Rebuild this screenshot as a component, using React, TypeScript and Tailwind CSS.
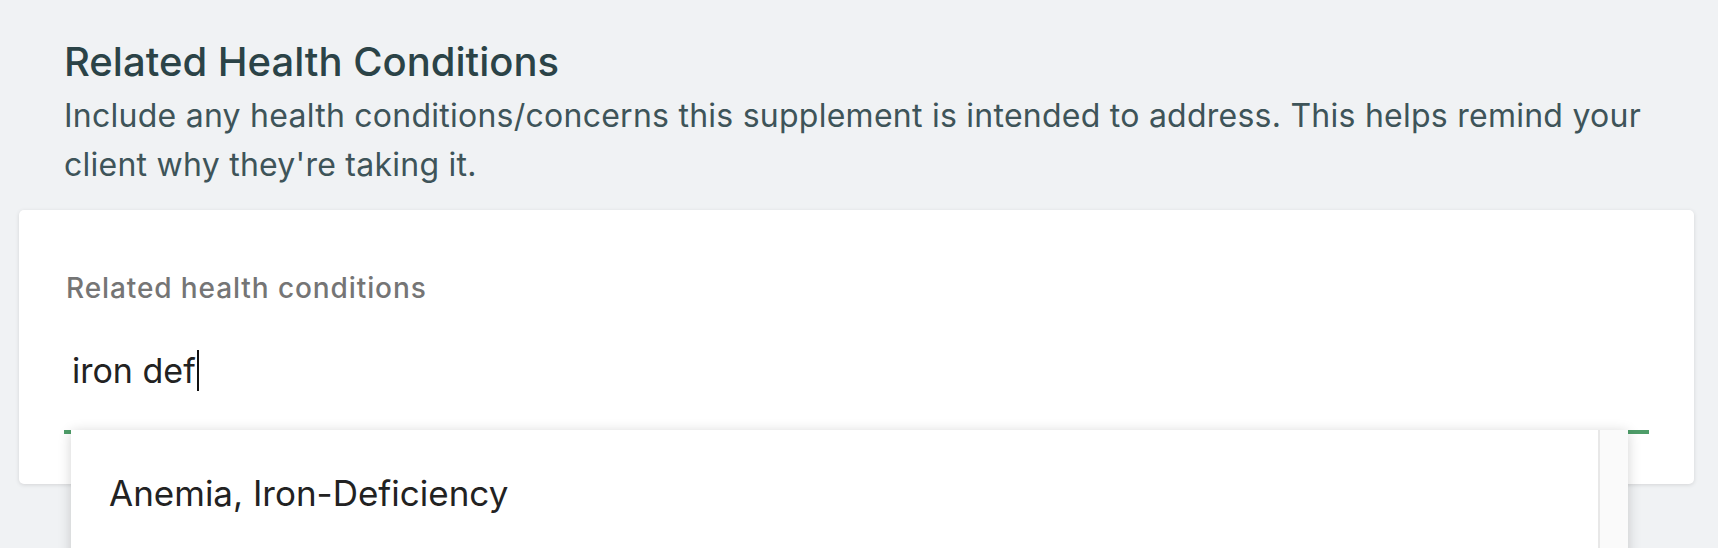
import React from 'react'

const options = ['Anemia, Iron-Deficiency']

function ConditionSearch() {
  return (
    <div className="relative">
      <label className="block pl-[2px] text-[28px] leading-[36px] font-medium tracking-[0.9px] text-[#757575]">
        Related health conditions
      </label>
      <div className="mt-[40px] flex h-[48px] items-center pl-[8px] text-[34px] text-[#222222]">
        <span>iron def</span>
        <span className="ml-[1px] inline-block h-[41px] w-[2px] bg-[#111111]" />
      </div>
      <div className="relative mt-[36px]">
        <div className="h-[4px] bg-[#4e9d69]" />
        <div className="absolute left-[7px] right-[21px] top-0 z-10 flex h-[160px] bg-white shadow-[0_2px_12px_rgba(0,0,0,0.18)]">
          <ul className="flex-1">
            {options.map((o) => (
              <li
                key={o}
                className="pl-[38px] pt-[39px] text-[35px] leading-[48px] text-[#222222]"
              >
                {o}
              </li>
            ))}
          </ul>
          <div className="w-[30px] border-l-2 border-[#e8e8e8] bg-[#fafafa]" />
        </div>
      </div>
    </div>
  )
}

export default function App() {
  return (
    <div
      className="h-[548px] overflow-hidden bg-[#f0f2f4] pl-[19px] pr-[24px] pt-[38px]"
      style={{ fontFamily: 'Inter, "Noto Sans", sans-serif' }}
    >
      <div className="pl-[45px]">
        <h2 className="text-[40px] leading-[48px] font-medium text-[#2b4347]">
          Related Health Conditions
        </h2>
        <p className="mt-[5px] text-[32px] leading-[49px] tracking-[0.25px] text-[#3e5459]">
          Include any health conditions/concerns this supplement is intended to
          address. This helps remind your client why they're taking it.
        </p>
      </div>
      <div className="mt-[21px] rounded-[5px] bg-white px-[45px] pb-[50px] pt-[60px] shadow-[0_1px_4px_rgba(0,0,0,0.12)]">
        <ConditionSearch />
      </div>
    </div>
  )
}
